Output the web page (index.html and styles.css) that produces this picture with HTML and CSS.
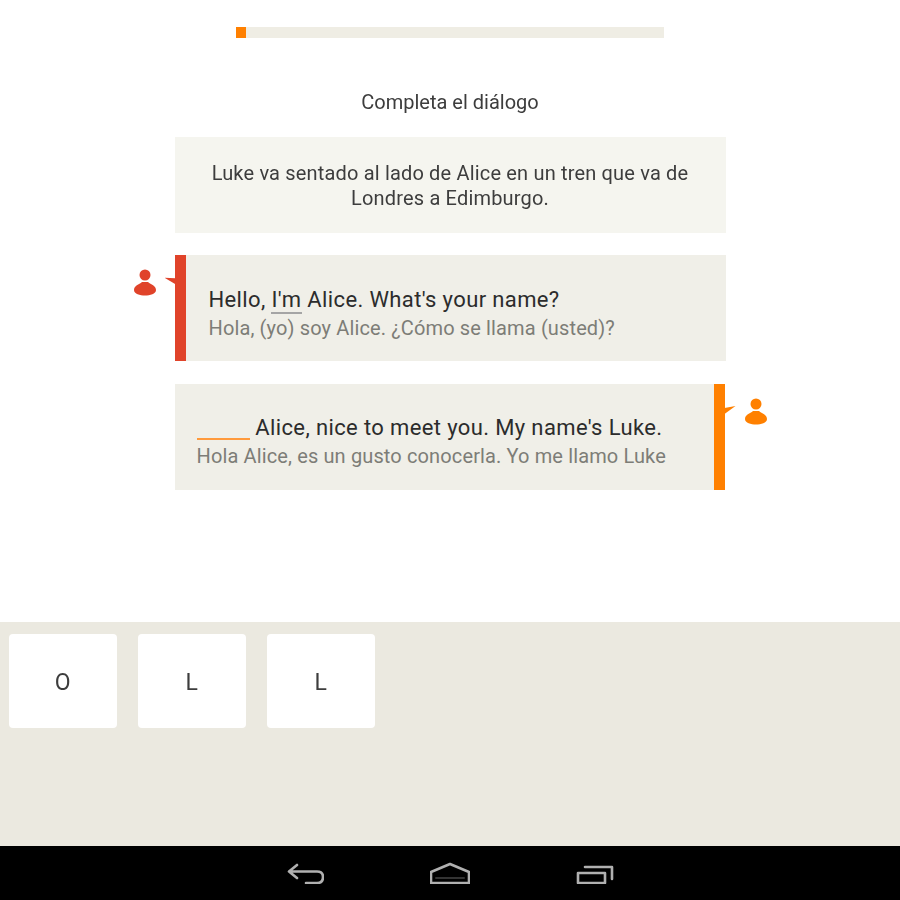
FILE: index.html
```html
<!DOCTYPE html>
<html lang="es">
<head>
<meta charset="utf-8">
<title>Completa el diálogo</title>
<link rel="stylesheet" href="styles.css">
</head>
<body>
<div class="screen">
  <main class="lesson">
    <div class="progress"><div class="progress-fill"></div></div>
    <h1 class="title">Completa el diálogo</h1>
    <p class="context">Luke va sentado al lado de Alice en un tren que va de<br>Londres a Edimburgo.</p>
    <div class="turn turn-left">
      <svg class="avatar" viewBox="0 0 22 28" width="22" height="28"><circle cx="11" cy="7" r="5.5"/><path d="M0 22 C0 17.5 5 16.5 8 14 L14 14 C17 16.5 22 17.5 22 22 C22 26 16 27.5 11 27.5 C6 27.5 0 26 0 22 Z"/></svg>
      <span class="tail tail-left"></span>
      <div class="bubble bubble-left">
        <p class="line"><span>Hello,</span> <span class="hint">I'm</span> Alice. What's your name?</p>
        <p class="trans">Hola, (yo) soy Alice. ¿Cómo se llama (usted)?</p>
      </div>
    </div>
    <div class="turn turn-right">
      <div class="bubble bubble-right">
        <p class="line"><span class="blank"></span> Alice, nice to meet you. My name's Luke.</p>
        <p class="trans">Hola Alice, es un gusto conocerla. Yo me llamo Luke</p>
      </div>
      <span class="tail tail-right"></span>
      <svg class="avatar avatar-right" viewBox="0 0 22 28" width="22" height="28"><circle cx="11" cy="7" r="5.5"/><path d="M0 22 C0 17.5 5 16.5 8 14 L14 14 C17 16.5 22 17.5 22 22 C22 26 16 27.5 11 27.5 C6 27.5 0 26 0 22 Z"/></svg>
    </div>
  </main>
  <section class="tray">
    <div class="key">O</div>
    <div class="key">L</div>
    <div class="key">L</div>
  </section>
  <nav class="navbar">
    <svg viewBox="0 0 38 22" width="38" height="22" class="nav-icon"><path d="M11 3 L3 9.5 L11 16 M3 9.5 H31 Q37 9.5 37 15 Q37 21 31 21 H20"/></svg>
    <svg viewBox="0 0 40 22" width="40" height="22" class="nav-icon"><path d="M1 21 V10 L20 2 L39 10 V21 Z"/><path class="nav-inner" d="M6 16 H34"/></svg>
    <svg viewBox="0 0 38 22" width="38" height="22" class="nav-icon"><path d="M2 11 H29 V21 H2 Z M9 5 H36 V17"/></svg>
  </nav>
</div>
</body>
</html>
```
FILE: styles.css
```css
* { box-sizing: border-box; }
html, body { margin: 0; padding: 0; }
body { width: 900px; height: 900px; background: #fff; font-family: Roboto, "Liberation Sans", sans-serif; overflow: hidden; }
.screen { width: 900px; height: 900px; display: flex; flex-direction: column; filter: blur(0.6px); }
.lesson { height: 622px; display: flex; flex-direction: column; align-items: center; padding-top: 27px; }
.progress { width: 428px; height: 11px; background: #efede4; }
.progress-fill { width: 10px; height: 11px; background: #ff8000; }
.title { margin: 51px 0 0; height: 48px; font-size: 20px; line-height: 26px; font-weight: 400; color: #3d3d3d; text-align: center; }
.context { margin: 0; width: 551px; height: 96px; padding-top: 24px; background: #f5f5ef; color: #3d3d3d; font-size: 20px; letter-spacing: 0.17px; line-height: 25px; text-align: center; }
.turn { width: 551px; height: 106px; display: flex; position: relative; }
.turn-left { margin-top: 22px; }
.turn-right { margin-top: 23px; }
.bubble { height: 106px; background: #f0efe8; }
.bubble-left { width: 551px; border-left: 11px solid #e0432a; padding: 31px 0 0 23px; }
.bubble-right { width: 550px; border-right: 11px solid #ff8000; padding: 30px 0 0 22px; }
.line { margin: 0; font-size: 22px; letter-spacing: 0.37px; line-height: 28px; color: #2c2c2c; white-space: nowrap; }
.trans { margin: 1px 0 0; font-size: 20px; letter-spacing: 0.13px; line-height: 26px; color: #7d7d77; white-space: nowrap; }
.hint { border-bottom: 2px solid #a5a5a5; display: inline-block; line-height: 24px; }
.blank { display: inline-block; width: 53px; height: 2px; background: #ff9a3c; vertical-align: -5px; }
.avatar { position: absolute; left: -41px; top: 13px; fill: #e0432a; }
.avatar-right { left: auto; right: -41px; fill: #ff8000; }
.tail { position: absolute; top: 22px; width: 11px; height: 8px; }
.tail-left { left: -10px; background: #e0432a; clip-path: polygon(0 10%, 100% 15%, 100% 90%); }
.tail-right { right: -10px; background: #ff8000; clip-path: polygon(0 25%, 100% 0, 0 100%); }
.tray { height: 224px; background: #ebe9e0; display: flex; align-items: flex-start; gap: 21.5px; padding: 12px 0 0 9px; }
.key { width: 107.5px; height: 94px; padding-top: 2px; background: #fff; border-radius: 4px; display: flex; align-items: center; justify-content: center; font-size: 23px; color: #3d3d3d; }
.navbar { height: 54px; background: #000; display: flex; justify-content: center; align-items: center; gap: 106px; }
.nav-icon { fill: none; stroke: #b0b0b0; stroke-width: 2.6; stroke-linejoin: round; stroke-linecap: round; }
.nav-inner { stroke: #333; stroke-width: 2; }
```
